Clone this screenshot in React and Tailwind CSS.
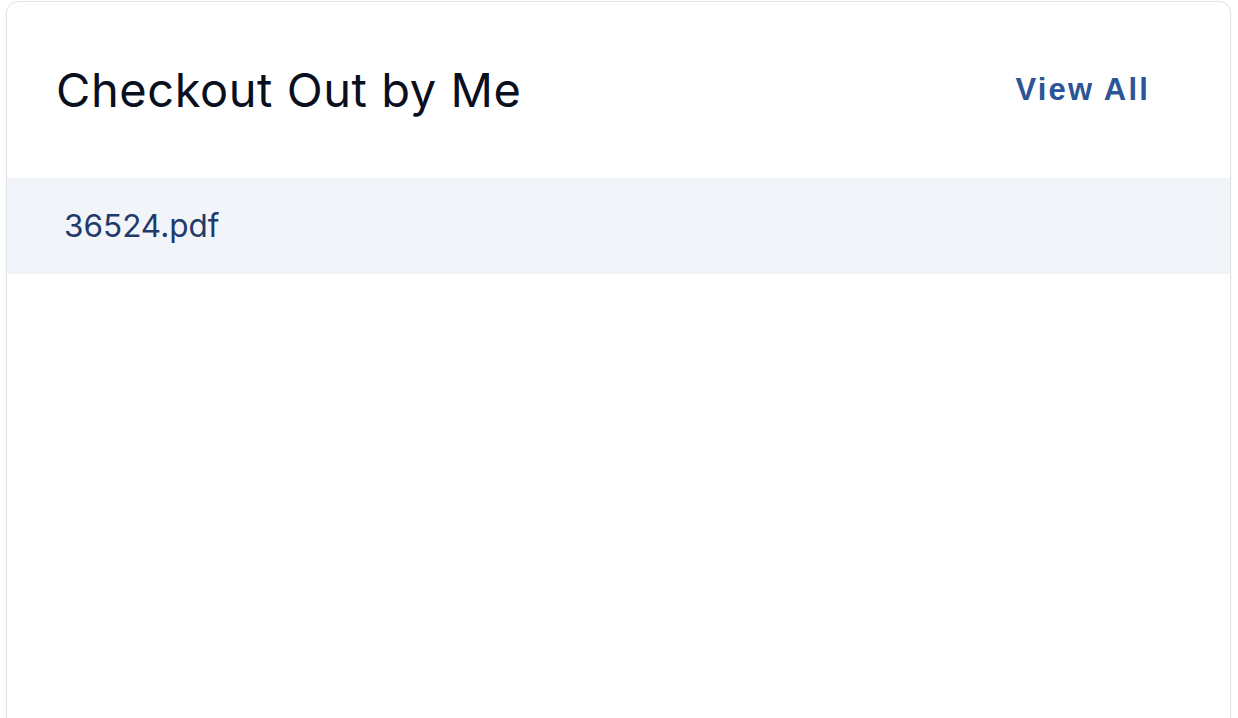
export default function App() {
  return (
    <div className="w-[1238px] h-[718px] bg-white overflow-hidden pl-[6px] pr-[7px] pt-[1px]">
      <div className="h-[760px] rounded-[12px] border border-[#e3e4e8] bg-white shadow-[0_1px_3px_rgba(0,0,0,0.06)] flex flex-col">
        <div className="flex items-center justify-between h-[176px] pl-[49px] pr-[80px] pb-[2px]">
          <h2 className="text-[47px] text-[#0b1020] font-normal leading-none tracking-[0.012em]" style={{ fontFamily: 'Inter, "Noto Sans", sans-serif' }}>
            Checkout Out by Me
          </h2>
          <a className="text-[31px] font-bold text-[#2c5598] leading-none tracking-[0.07em]" style={{ fontFamily: '"Liberation Sans", Arial, sans-serif' }}>
            View All
          </a>
        </div>
        <div className="h-[96px] bg-[#f1f4f9] flex items-center pl-[57px]">
          <span className="text-[31.5px] text-[#1f3a6b] leading-none" style={{ fontFamily: 'Inter, "Noto Sans", sans-serif' }}>
            36524.pdf
          </span>
        </div>
      </div>
    </div>
  );
}
